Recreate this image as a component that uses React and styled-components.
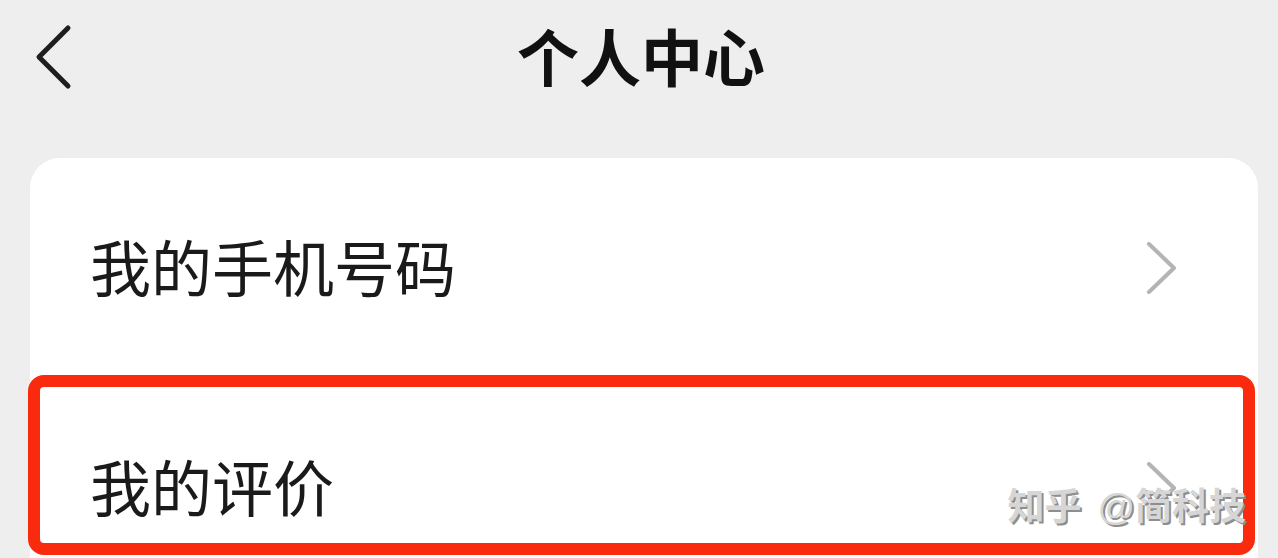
import styled, { createGlobalStyle } from 'styled-components';

const GlobalStyle = createGlobalStyle`
  html, body {
    margin: 0;
    padding: 0;
    background: #eeeeee;
  }
  body {
    font-family: "Noto Sans CJK SC", "Noto Sans", sans-serif;
    color: #1a1a1a;
  }
`;

const Page = styled.div`
  width: 1278px;
  height: 558px;
  overflow: hidden;
  background: #eeeeee;
  display: flex;
  flex-direction: column;
`;

const Header = styled.header`
  height: 118px;
  display: grid;
  grid-template-columns: 1fr auto 1fr;
  align-items: center;
  flex-shrink: 0;
`;

const BackButton = styled.button`
  justify-self: start;
  margin-left: 34px;
  margin-top: -3px;
  padding: 0;
  border: none;
  background: none;
  display: flex;
  cursor: pointer;
`;

const Title = styled.h1`
  margin: -8px 0 0 4px;
  font-size: 62px;
  font-weight: 700;
  line-height: 1;
  letter-spacing: 0;
  color: #111;
`;

const Content = styled.main`
  padding-top: 40px;
`;

const Card = styled.section`
  margin: 0 20px 0 30px;
  background: #fff;
  border-radius: 30px 30px 0 0;
  display: flex;
  flex-direction: column;
`;

const Row = styled.div`
  position: relative;
  height: 220px;
  padding: 0 80px 0 60px;
  display: flex;
  align-items: center;
  justify-content: space-between;
  cursor: pointer;

  ${({ $highlighted }) =>
    $highlighted &&
    `
    &::after {
      content: '';
      position: absolute;
      top: -3px;
      left: -2px;
      right: 3px;
      height: 180px;
      box-sizing: border-box;
      border: 12px solid #fa2a0e;
      border-radius: 16px;
      pointer-events: none;
    }
  `}
`;

const Label = styled.span`
  margin-top: -5px;
  font-size: 61px;
  line-height: 1;
  color: #1a1a1a;
`;

const Watermark = styled.span`
  position: absolute;
  right: 12px;
  top: 108px;
  font-size: 37px;
  line-height: 1;
  font-weight: 700;
  color: #d6d6d6;
  text-shadow: 2px 2px 0 #8e8e8e;
  white-space: nowrap;
  z-index: 1;

  b {
    font-family: "Liberation Sans", sans-serif;
    font-weight: 400;
    margin-left: 16px;
  }
`;

const BackIcon = () => (
  <svg width="40" height="68" viewBox="0 0 40 68" fill="none">
    <path
      d="M34 4 L5 33 L34 62"
      stroke="#1e1e1e"
      strokeWidth="5"
      strokeLinecap="round"
      strokeLinejoin="round"
    />
  </svg>
);

const ChevronRight = () => (
  <svg width="32" height="52" viewBox="0 0 32 52" fill="none">
    <path
      d="M3 2 L28 26 L3 50"
      stroke="#b4b4b4"
      strokeWidth="4"
      strokeLinecap="round"
      strokeLinejoin="round"
    />
  </svg>
);

const items = [
  { label: '我的手机号码' },
  { label: '我的评价', highlighted: true },
];

export default function App() {
  return (
    <>
      <GlobalStyle />
      <Page>
        <Header>
          <BackButton aria-label="返回">
            <BackIcon />
          </BackButton>
          <Title>个人中心</Title>
          <span />
        </Header>
        <Content>
          <Card>
            {items.map((item) => (
              <Row key={item.label} $highlighted={item.highlighted}>
                <Label>{item.label}</Label>
                <ChevronRight />
                {item.highlighted && (
                  <Watermark>
                    知乎<b>@</b>简科技
                  </Watermark>
                )}
              </Row>
            ))}
          </Card>
        </Content>
      </Page>
    </>
  );
}
